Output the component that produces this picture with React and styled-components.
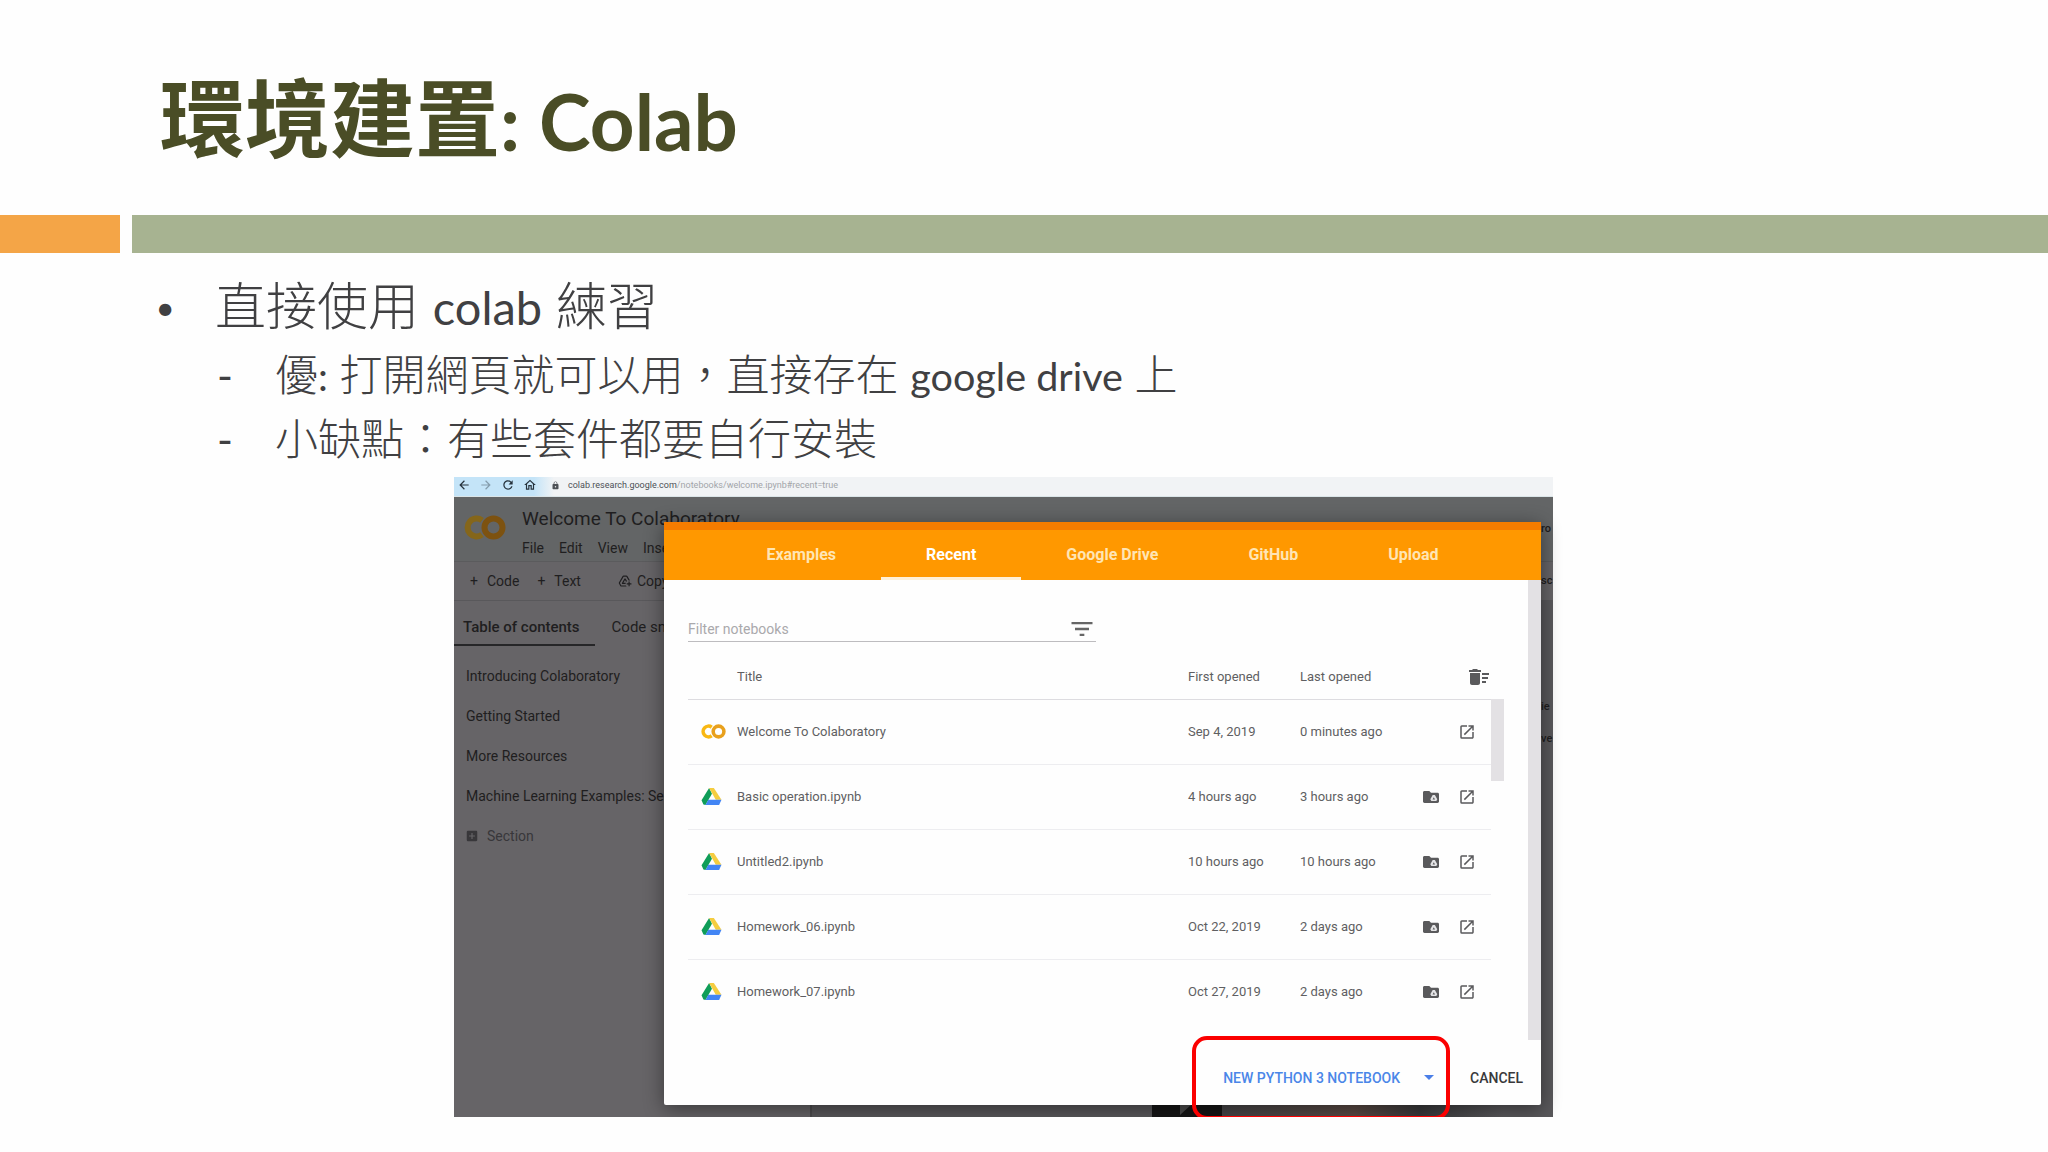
import React from 'react';
import styled, {createGlobalStyle} from 'styled-components'
import {
    MdAddBox,
    MdAddToDrive,
    MdArrowBack,
    MdArrowForward,
    MdDeleteSweep,
    MdFilterList,
    MdLock,
    MdOpenInNew,
    MdOutlineHome,
    MdRefresh,
} from "react-icons/md";

const tabs = ['Examples', 'Recent', 'Google Drive', 'GitHub', 'Upload']

const notebooks = [
    {title: 'Welcome To Colaboratory', first: 'Sep 4, 2019', last: '0 minutes ago', colab: true},
    {title: 'Basic operation.ipynb', first: '4 hours ago', last: '3 hours ago'},
    {title: 'Untitled2.ipynb', first: '10 hours ago', last: '10 hours ago'},
    {title: 'Homework_06.ipynb', first: 'Oct 22, 2019', last: '2 days ago'},
    {title: 'Homework_07.ipynb', first: 'Oct 27, 2019', last: '2 days ago'},
]

const sections = [
    'Introducing Colaboratory',
    'Getting Started',
    'More Resources',
    'Machine Learning Examples: Seedbank',
]

const ColabLogo = ({width, height, left, right}) => (
    <svg width={width} height={height} viewBox="0 0 42 25" fill="none" strokeWidth="6" aria-hidden="true">
        <path d="M18 5.300A9 9 0 1 0 18 19.700" stroke={left}/>
        <circle cx="29.500" cy="12.500" r="9" stroke={right}/>
    </svg>
)

const DriveLogo = () => (
    <svg width="21" height="19" viewBox="0 0 22 20" aria-hidden="true">
        <path d="M8.500 1 11.500 7 4.700 19 2.500 18.500 0.500 14z" fill="#0f9d58"/>
        <path d="M8.500 1h5L21.500 13.500h-6z" fill="#f5cd40"/>
        <path d="M7.600 13.500h13.900L19 19H4.700z" fill="#4285f4"/>
    </svg>
)

const FolderDrive = () => (
    <svg width="16" height="14" viewBox="0 0 16 14" aria-hidden="true">
        <path d="M1.5 1h4.8L8 2.7h6.5c.8 0 1.5.6 1.5 1.4v7.5c0 .8-.7 1.4-1.5 1.4h-13C.7 13 0 12.400 0 11.600V2.400C0 1.600.7 1 1.500 1z" fill="#5a5a5c"/>
        <path d="M9.700 5h2.200l2.400 4.200-1 1.800H8.300l-1-1.800z" fill="#e4e4e6"/>
        <path d="M10.800 7.300 12 9.500H9.600z" fill="#5a5a5c"/>
    </svg>
)

const App = () => {
    return (
        <Slide lang="zh-TW">
            <GlobalStyle/>
            <Title>環境建置<TitleLatin>: Colab</TitleLatin></Title>
            <Bars><span/><span/></Bars>
            <Points>
                <Point>
                    直接使用 <Latin>colab</Latin> 練習
                    <SubPoints>
                        <SubPoint>優<Latin>:</Latin> 打開網頁就可以用，直接存在 <Latin>google drive</Latin> 上</SubPoint>
                        <SubPoint>小缺點：有些套件都要自行安裝</SubPoint>
                    </SubPoints>
                </Point>
            </Points>
            <Screen>
                <Page>
                    <Browser>
                        <MdArrowBack/>
                        <MdArrowForward opacity="0.4"/>
                        <MdRefresh/>
                        <MdOutlineHome/>
                        <Address>
                            <MdLock/>
                            <span>colab.research.google.com<i>/notebooks/welcome.ipynb#recent=true</i></span>
                        </Address>
                    </Browser>
                    <AppHead>
                        <ColabLogo width={42} height={25} left="#85661a" right="#7d5210"/>
                        <div>
                            <DocName>Welcome To Colaboratory</DocName>
                            <Menu>
                                <span>File</span><span>Edit</span><span>View</span><span>Insert</span>
                            </Menu>
                        </div>
                        <Cut>ro</Cut>
                    </AppHead>
                    <Toolbar>
                        <span>+</span><span>Code</span>
                        <span>+</span><span>Text</span>
                        <MdAddToDrive/><span>Copy to Drive</span>
                        <Cut>sc</Cut>
                    </Toolbar>
                    <Workspace>
                        <Side>
                            <SideTabs>
                                <SideTab $active>Table of contents</SideTab>
                                <SideTab>Code snippets</SideTab>
                            </SideTabs>
                            {sections.map((name) => <SideItem key={name}>{name}</SideItem>)}
                            <SideItem $muted><MdAddBox/>Section</SideItem>
                        </Side>
                        <Notebook>
                            <Cut>ie</Cut>
                            <Cut>ve</Cut>
                            <Thumbnails>
                                <svg width="70" height="13" aria-hidden="true">
                                    <path d="M0 0h70v13H0z" fill="#161616"/>
                                    <path d="M28 0h12L28 11z" fill="#4b4b4b"/>
                                </svg>
                                <Poster/>
                            </Thumbnails>
                        </Notebook>
                    </Workspace>
                </Page>

                <Dialog role="dialog" aria-label="Open notebook">
                    <Tabs>
                        {tabs.map((tab) => <Tab key={tab} type="button" $active={tab === 'Recent'}>{tab}</Tab>)}
                    </Tabs>
                    <Content>
                        <Filter>
                            <input type="text" placeholder="Filter notebooks" aria-label="Filter notebooks"/>
                            <MdFilterList/>
                        </Filter>
                        <List>
                            <Table>
                                <colgroup>
                                    <Col $w={49}/><col/><Col $w={112}/><Col $w={123}/><Col $w={35}/><Col $w={33}/>
                                </colgroup>
                                <thead>
                                    <tr>
                                        <th/>
                                        <th>Title</th>
                                        <th>First opened</th>
                                        <th>Last opened</th>
                                        <th colSpan={2}>
                                            <IconButton type="button" aria-label="Clear recent" $end><MdDeleteSweep size={24}/></IconButton>
                                        </th>
                                    </tr>
                                </thead>
                                <tbody>
                                {notebooks.map(({title, first, last, colab}) => (
                                    <tr key={title}>
                                        <FileIcon>
                                            {colab ? <ColabLogo width={25} height={15} left="#f9b814" right="#e8a01c"/> : <DriveLogo/>}
                                        </FileIcon>
                                        <td>{title}</td>
                                        <td>{first}</td>
                                        <td>{last}</td>
                                        <td>
                                            {!colab && <IconButton type="button" aria-label="Show in Drive"><FolderDrive/></IconButton>}
                                        </td>
                                        <td>
                                            <IconButton type="button" aria-label="Open in new tab"><MdOpenInNew size={18}/></IconButton>
                                        </td>
                                    </tr>
                                ))}
                                </tbody>
                            </Table>
                            <Thumb/>
                        </List>
                    </Content>
                    <Actions>
                        <Highlight>
                            <TextButton type="button" $primary>NEW PYTHON 3 NOTEBOOK</TextButton>
                            <IconButton type="button" aria-label="More options">
                                <svg width="10" height="5" viewBox="0 0 10 5"><path d="M0 0h10L5 5z" fill="#4a7fe8"/></svg>
                            </IconButton>
                        </Highlight>
                        <TextButton type="button">CANCEL</TextButton>
                    </Actions>
                </Dialog>
            </Screen>
        </Slide>
    );
};

export default App;

const GlobalStyle = createGlobalStyle`
  body {
    margin: 0;
    background: #fefefe;
  }
  * {
    box-sizing: border-box;
  }
  button, input {
    font: inherit;
    border: 0;
    padding: 0;
    background: none;
  }
`

const Slide = styled.main`
  color: #404042;
  font-family: Lato, "Noto Sans CJK TC", sans-serif;
`

const Title = styled.h1`
  margin: 0;
  padding: 58px 160px 37px;
  font-size: 85px;
  line-height: 120px;
  color: #4a4d26;
`

const TitleLatin = styled.span`
  font-size: 78px;
  line-height: 0;
`

const Bars = styled.div`
  display: grid;
  grid-template-columns: 120px 1fr;
  gap: 12px;
  height: 38px;
  background: #fefefe;

  span {
    background: #a7b391;
  }
  span:first-child {
    background: #f4a547;
  }
`

const Points = styled.ul`
  margin: 0;
  padding: 16px 0 6px 215px;
  list-style: none;
  font-size: 51px;
  font-weight: 300;
  line-height: 74px;
`

const Point = styled.li`
  &::before {
    content: "•";
    float: left;
    margin-left: -62px;
    font-size: 42px;
  }
`

const SubPoints = styled.ul`
  margin: 0;
  padding: 0 0 0 60px;
  list-style: none;
  font-size: 43px;
  line-height: 64px;
`

const SubPoint = styled.li`
  &::before {
    content: "-";
    float: left;
    margin-left: -58px;
    font-weight: 400;
  }
`

const Latin = styled.span`
  font-size: 0.92em;
  font-weight: 400;
  line-height: 0;
`

/* the page and the dialog share one grid cell, the dialog sets the height */
const Screen = styled.section`
  display: grid;
  margin: 0 495px 0 454px;
  font-family: Roboto, sans-serif;
  font-size: 14px;
  line-height: 20px;
`

const Page = styled.div`
  grid-area: 1 / 1;
  display: flex;
  flex-direction: column;
  min-width: 0;
  overflow: hidden;
  white-space: nowrap;
  color: #1f1e20;
  background: #666467;
`

const Browser = styled.div`
  display: flex;
  align-items: center;
  gap: 8px;
  height: 20px;
  padding: 0 3px 3px;
  color: #26323c;
  background: linear-gradient(90deg, #c4e4f8 80px, #f1f3f5 100px);
  border-bottom: 1px solid #dbe5e8;

  > svg {
    width: 14px;
    height: 14px;
  }
`

const Address = styled.div`
  display: flex;
  align-items: center;
  gap: 8px;
  padding-left: 6px;
  font-size: 9px;
  color: #4d5156;

  i {
    font-style: normal;
    color: #a2a5a9;
  }
`

const AppHead = styled.div`
  display: flex;
  gap: 16px;
  height: 65px;
  padding: 10px 0 0 10px;
  background: #636566;
  border-bottom: 1px solid #5b5b5d;

  > svg {
    flex: none;
    margin-top: 8px;
  }
`

const DocName = styled.div`
  font-size: 19px;
  line-height: 24px;
`

const Menu = styled.div`
  display: flex;
  gap: 15px;
  padding-top: 7px;
`

const Cut = styled.div`
  width: 12px;
  margin-left: auto;
  padding-top: 12px;
  font-size: 11px;
  font-weight: 500;
`

const Toolbar = styled.div`
  display: flex;
  align-items: center;
  gap: 9px;
  height: 39px;
  padding-left: 16px;
  border-bottom: 1px solid #59585b;

  span:nth-of-type(3) {
    margin-left: 9px;
  }
  svg {
    margin: 0 -4px 0 28px;
  }
  ${Cut} {
    padding-top: 0;
  }
`

const Workspace = styled.div`
  display: flex;
  flex: 1;
  min-height: 0;
`

const Side = styled.aside`
  width: 358px;
  border-right: 2px solid #4c4b4d;
`

const SideTabs = styled.div`
  display: flex;
  height: 45px;
  margin-bottom: 10px;
`

const SideTab = styled.div`
  padding: 16px 15px 0 9px;
  font-size: 15px;
  font-weight: ${props => props.$active ? 500 : 400};
  border-bottom: ${props => props.$active ? '2px solid #262628' : '0'};

  & + & {
    padding-left: 17px;
  }
`

const SideItem = styled.div`
  display: flex;
  align-items: center;
  gap: 8px;
  height: 40px;
  padding-left: 12px;
  color: ${props => props.$muted ? '#38373a' : '#1f1e20'};

  svg {
    margin-left: -1px;
  }
`

const Notebook = styled.div`
  display: flex;
  flex-direction: column;
  flex: 1;
  padding-top: 84px;
  background: #59585b;
`

const Thumbnails = styled.div`
  display: flex;
  margin-top: auto;
  padding-left: 340px;
`

const Poster = styled.div`
  flex: 1;
  height: 13px;
  background: linear-gradient(90deg, #464547, #5a4a44 40%, #39393b 60%, #59585b 85%);
`

const Dialog = styled.div`
  grid-area: 1 / 1;
  margin: 45px 12px 12px 210px;
  color: #5f5f62;
  background: #fefefe;
  border-radius: 2px;
  box-shadow: 0 4px 20px rgba(0, 0, 0, 0.45);
  z-index: 1;
`

const Tabs = styled.div`
  display: flex;
  justify-content: center;
  height: 58px;
  background: #ff9800;
  border-top: 8px solid #f57c00;
`

const Tab = styled.button`
  padding: 3px 45px 0;
  border-bottom: 3px solid ${props => props.$active ? '#fff0d8' : 'transparent'};
  font-size: 16px;
  font-weight: 700;
  color: ${props => props.$active ? '#fff' : '#ffe5b4'};
`

const Content = styled.div`
  height: 460px;
  padding: 28px 24px 0;
  border-right: 13px solid #e3e1e4;
`

const Filter = styled.div`
  display: flex;
  align-items: center;
  width: 408px;
  height: 34px;
  padding-top: 8px;
  border-bottom: 1px solid #bdbcbf;

  input {
    flex: 1;
    min-width: 0;
    outline: 0;
  }
  input::placeholder {
    color: #aaa9ac;
  }
  svg {
    width: 28px;
    height: 28px;
    color: #666;
  }
`

const List = styled.div`
  display: flex;
  margin-top: 14px;
`

const Table = styled.table`
  flex: 1;
  width: 100%;
  table-layout: fixed;
  border-collapse: collapse;
  font-size: 13px;

  th, td {
    height: 65px;
    padding: 0;
    font-weight: 400;
    text-align: left;
    border-bottom: 1px solid #ededf0;
  }
  th {
    height: 43px;
    border-color: #dddce0;
  }
  tr:last-child td {
    border-bottom: 0;
  }
`

const Col = styled.col`
  width: ${props => props.$w}px;
`

const FileIcon = styled.td`
  svg {
    display: block;
    margin-left: 13px;
  }
`

const IconButton = styled.button`
  display: block;
  color: #5a5a5c;
  margin-left: ${props => props.$end ? 'auto' : '0'};

  svg {
    display: block;
  }
`

const Thumb = styled.div`
  width: 13px;
  height: 82px;
  margin-top: 43px;
  background: #e3e1e4;
`

const Actions = styled.div`
  display: flex;
  justify-content: flex-end;
  align-items: center;
  gap: 20px;
  height: 65px;
  padding: 10px 18px 0 0;
`

const Highlight = styled.div`
  display: flex;
  flex: none;
  align-items: center;
  gap: 24px;
  height: 84px;
  padding: 0 12px 0 27px;
  border: 4px solid #fb0000;
  border-radius: 15px;
`

const TextButton = styled.button`
  font-size: 14px;
  font-weight: 500;
  color: ${props => props.$primary ? '#4a86e8' : '#39393b'};
`
